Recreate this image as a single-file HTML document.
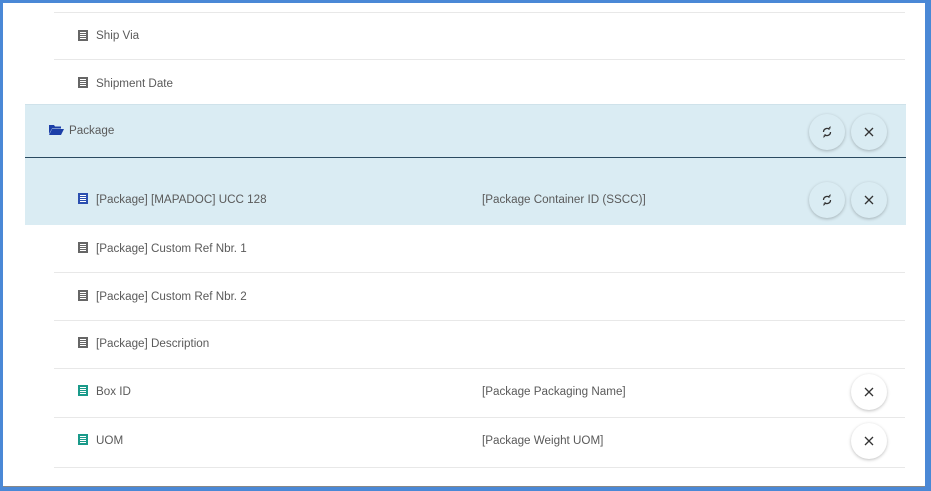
<!DOCTYPE html>
<html><head><style>
body{margin:0;width:931px;height:491px;background:#4a88d6;position:relative;overflow:hidden;font-family:"Liberation Sans",sans-serif;font-size:11.65px;color:#5a5a5a}
#w{position:absolute;left:3px;top:3px;width:922px;height:483px;background:#fff;border-bottom:1px solid #888}
.a{position:absolute}
.ln{position:absolute;left:54px;width:851px;height:1px;background:#e8e8e8}
.t{position:absolute;line-height:14px}
.ic{position:absolute;width:10px;height:11px}
.btn{position:absolute;width:36px;height:36px;border-radius:50%;box-shadow:0 1px 3px rgba(0,0,0,.25);display:flex;align-items:center;justify-content:center}
</style></head><body>
<div id="w"></div>
<div class="ln" style="top:12px"></div>
<div class="ln" style="top:59px"></div>
<div class="a" style="left:25px;top:104px;width:881px;height:121px;background:#daecf3"></div>
<div class="a" style="left:25px;top:104px;width:881px;height:1px;background:#cfe2ea"></div>
<div class="a" style="left:25px;top:157px;width:881px;height:1px;background:#2a4a60"></div>
<div class="ln" style="top:272px"></div>
<div class="ln" style="top:320px"></div>
<div class="ln" style="top:368px"></div>
<div class="ln" style="top:417px"></div>
<div class="ln" style="top:467px"></div>

<svg width="0" height="0" style="position:absolute"><defs>
<symbol id="doc" viewBox="0 0 10 11"><rect x="0" y="0" width="10" height="11" fill="currentColor"/><g fill="#fff"><rect x="2" y="2" width="6" height="1"/><rect x="2" y="4" width="6" height="1"/><rect x="2" y="6" width="6" height="1"/><rect x="2" y="8" width="6" height="1"/></g></symbol>
<symbol id="ref" viewBox="0 0 12 12"><path d="M2.5 6a3.5 3.5 0 0 1 6-2.5M9.5 6a3.5 3.5 0 0 1-6 2.5" fill="none" stroke="#333" stroke-width="1.3"/><path d="M7 2.5h2.5V0z M5 9.5H2.5V12z" fill="#333"/></symbol>
<symbol id="x" viewBox="0 0 10 10"><path d="M1 1L9 9M9 1L1 9" stroke="#333" stroke-width="1.3"/></symbol>
</defs></svg>

<svg class="ic" style="left:78px;top:30px;color:#666"><use href="#doc"/></svg><div class="t" style="left:96px;top:29px">Ship Via</div>
<svg class="ic" style="left:78px;top:77px;color:#666"><use href="#doc"/></svg><div class="t" style="left:96px;top:77px">Shipment Date</div>
<svg class="a" style="left:49px;top:125px" width="15" height="10" viewBox="0 0 15 10"><path d="M0 0h5l1 1.5h6v2H3L0 9z M3 4h12l-3 6H0z" fill="#1c3fa8"/></svg>
<div class="t" style="left:69px;top:124px">Package</div>
<svg class="ic" style="left:78px;top:193px;color:#2b4fb0"><use href="#doc"/></svg><div class="t" style="left:96px;top:193px">[Package] [MAPADOC] UCC 128</div>
<div class="t" style="left:482px;top:193px">[Package Container ID (SSCC)]</div>
<svg class="ic" style="left:78px;top:242px;color:#666"><use href="#doc"/></svg><div class="t" style="left:96px;top:242px">[Package] Custom Ref Nbr. 1</div>
<svg class="ic" style="left:78px;top:290px;color:#666"><use href="#doc"/></svg><div class="t" style="left:96px;top:290px">[Package] Custom Ref Nbr. 2</div>
<svg class="ic" style="left:78px;top:337px;color:#666"><use href="#doc"/></svg><div class="t" style="left:96px;top:337px">[Package] Description</div>
<svg class="ic" style="left:78px;top:385px;color:#1a9a8a"><use href="#doc"/></svg><div class="t" style="left:96px;top:385px">Box ID</div>
<div class="t" style="left:482px;top:385px">[Package Packaging Name]</div>
<svg class="ic" style="left:78px;top:434px;color:#1a9a8a"><use href="#doc"/></svg><div class="t" style="left:96px;top:434px">UOM</div>
<div class="t" style="left:482px;top:434px">[Package Weight UOM]</div>

<div class="btn" style="left:809px;top:114px;background:#daecf3"><svg width="12" height="12"><use href="#ref"/></svg></div>
<div class="btn" style="left:851px;top:114px;background:#daecf3"><svg width="10" height="10"><use href="#x"/></svg></div>
<div class="btn" style="left:809px;top:182px;background:#daecf3"><svg width="12" height="12"><use href="#ref"/></svg></div>
<div class="btn" style="left:851px;top:182px;background:#daecf3"><svg width="10" height="10"><use href="#x"/></svg></div>
<div class="btn" style="left:851px;top:374px;background:#fff"><svg width="10" height="10"><use href="#x"/></svg></div>
<div class="btn" style="left:851px;top:423px;background:#fff"><svg width="10" height="10"><use href="#x"/></svg></div>
</body></html>
